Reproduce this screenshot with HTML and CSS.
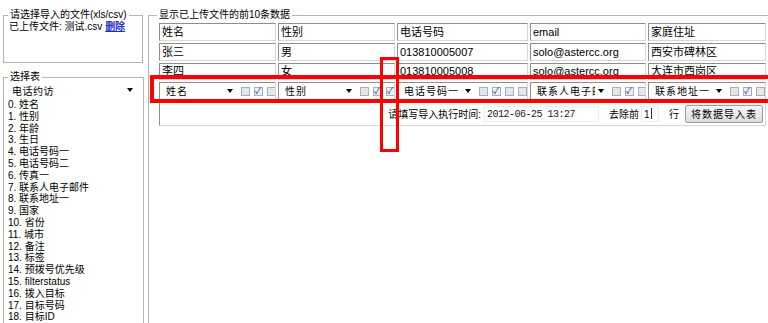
FILE: index.html
```html
<!DOCTYPE html>
<html lang="zh-CN">
<head>
  <meta charset="UTF-8" />
  <title>导入数据</title>
  <link rel="stylesheet" href="styles.css">
</head>
<body>
  <div class="page">

    <!-- Left: file + table choice -->
    <aside class="side">
      <fieldset class="box file-box">
        <legend>请选择导入的文件(xls/csv)</legend>
        <div class="uploaded">已上传文件: 测试.csv <a href="#">删除</a></div>
      </fieldset>

      <fieldset class="box table-box">
        <legend>选择表</legend>
        <div class="select wide"><span class="label">电话约访</span><span class="arrow"></span></div>
        <ol class="fields">
          <li>0. 姓名</li>
          <li>1. 性别</li>
          <li>2. 年龄</li>
          <li>3. 生日</li>
          <li>4. 电话号码一</li>
          <li>5. 电话号码二</li>
          <li>6. 传真一</li>
          <li>7. 联系人电子邮件</li>
          <li>8. 联系地址一</li>
          <li>9. 国家</li>
          <li>10. 省份</li>
          <li>11. 城市</li>
          <li>12. 备注</li>
          <li>13. 标签</li>
          <li>14. 预拨号优先级</li>
          <li>15. filterstatus</li>
          <li>16. 拨入目标</li>
          <li>17. 目标号码</li>
          <li>18. 目标ID</li>
        </ol>
      </fieldset>
    </aside>

    <!-- Right: preview of uploaded rows -->
    <section class="main">
      <fieldset class="box preview">
        <legend>显示已上传文件的前10条数据</legend>
        <table class="grid">
          <tr>
            <td class="c1">姓名</td>
            <td class="c2">性别</td>
            <td class="c3">电话号码</td>
            <td class="c4">email</td>
            <td class="c5">家庭住址</td>
          </tr>
          <tr>
            <td>张三</td>
            <td>男</td>
            <td>013810005007</td>
            <td>solo@astercc.org</td>
            <td>西安市碑林区</td>
          </tr>
          <tr class="short">
            <td>李四</td>
            <td>女</td>
            <td>013810005008</td>
            <td>solo@astercc.org</td>
            <td>大连市西岗区</td>
          </tr>
          <tr class="picks">
            <td>
              <div class="pick">
                <div class="select"><span class="label">姓名</span><span class="arrow"></span></div>
                <span class="cb"></span><span class="cb on"></span><span class="cb"></span>
              </div>
            </td>
            <td>
              <div class="pick">
                <div class="select"><span class="label">性别</span><span class="arrow"></span></div>
                <span class="cb"></span><span class="cb on"></span><span class="cb on"></span>
              </div>
            </td>
            <td>
              <div class="pick">
                <div class="select"><span class="label">电话号码一</span><span class="arrow"></span></div>
                <span class="cb"></span><span class="cb on"></span><span class="cb"></span><span class="cb"></span>
              </div>
            </td>
            <td>
              <div class="pick">
                <div class="select"><span class="label">联系人电子邮件</span><span class="arrow"></span></div>
                <span class="cb"></span><span class="cb on"></span><span class="cb"></span>
              </div>
            </td>
            <td>
              <div class="pick">
                <div class="select"><span class="label">联系地址一</span><span class="arrow"></span></div>
                <span class="cb"></span><span class="cb on"></span><span class="cb"></span>
              </div>
            </td>
          </tr>
          <tr class="actions">
            <td colspan="5">
              <div class="run">
                <span>请填写导入执行时间:</span>
                <span class="input date">2012-06-25 13:27</span>
                <span class="skip">去除前</span>
                <span class="input num">1</span>
                <span class="unit">行</span>
                <button class="button">将数据导入表</button>
              </div>
            </td>
          </tr>
        </table>
      </fieldset>
    </section>

    <!-- Red annotation boxes -->
    <div class="mark mark-row"></div>
    <div class="mark mark-col"></div>
  </div>
</body>
</html>
```

FILE: styles.css
```css
* {
  box-sizing: border-box;
}

html, body {
  margin: 0;
  height: 100%;
  overflow: hidden;
  background: #fff;
}

body {
  font-family: "Liberation Sans", "Noto Sans CJK SC", sans-serif;
  font-size: 10px;
  color: #000;
}

.page {
  display: flex;
  height: 323px;
  position: relative;
}

/* Fieldsets */
.box {
  border: 1px solid #b4b4b4;
  margin: 0 0 0 3px;
  padding: 0 4px;
  min-width: 0;
}

.box legend {
  padding: 0 2px;
  line-height: 12px;
}

/* Left column */
.side {
  width: 145px;
  flex: none;
  padding-top: 9px;
}

.file-box {
  width: 140px;
  height: 54px;
}

.uploaded {
  line-height: 12px;
  padding-left: 1px;
}

.uploaded a {
  color: #1a2fc8;
  font-weight: bold;
}

.table-box {
  width: 141px;
  height: 262px;
  margin-top: 8px;
}

.fields {
  list-style: none;
  margin: 2px 0 0;
  padding: 0;
  line-height: 11.8px;
}

/* Fake selects */
.select {
  display: flex;
  align-items: center;
  width: 76px;
  height: 16px;
  background: #fff;
  padding: 0 4px 0 5px;
  letter-spacing: 1px;
  flex: none;
}

.select .label {
  flex: 1;
  overflow: hidden;
  white-space: nowrap;
}

.select .arrow {
  width: 0;
  height: 0;
  margin-left: 3px;
  border-left: 3px solid transparent;
  border-right: 3px solid transparent;
  border-top: 4px solid #000;
  flex: none;
}

.select.wide {
  width: 130px;
  height: 14px;
  padding: 0 5px 0 4px;
  letter-spacing: 0.5px;
}

/* Right column */
.main {
  flex: 1;
  min-width: 0;
  padding: 9px 0 0 0;
}

.preview {
  margin-right: -30px;
  padding: 0 0 0 8px;
  height: 330px;
}

.grid {
  border-collapse: separate;
  border-spacing: 2px;
  table-layout: fixed;
  width: 611px;
  font-size: 11px;
}

.grid td {
  border: 1px solid #a9a9a9;
  border-color: #8e8e8e #d6d6d6 #d6d6d6 #8e8e8e;
  height: 18px;
  padding: 0 2px;
  line-height: 15px;
  white-space: nowrap;
  overflow: hidden;
}

.grid .c1 { width: 117px; }
.grid .c2 { width: 117px; }
.grid .c3 { width: 131px; }
.grid .c4 { width: 116px; }

.grid .short td {
  height: 17px;
}

.picks td {
  padding: 0 1px;
  font-size: 10px;
}

.pick {
  display: flex;
  align-items: center;
  gap: 4px;
}

.cb {
  width: 9px;
  height: 9px;
  border: 1px solid #a6b0bb;
  background: #e4e6e8;
  flex: none;
  position: relative;
}

.cb.on {
  background: #eef0f2;
}

.cb.on::after {
  content: "\2713";
  position: absolute;
  left: 0;
  top: -3px;
  font-size: 9px;
  line-height: 12px;
  color: #2848a8;
}

.actions td {
  height: 24px;
  padding: 0 2px 0 0;
  font-size: 10px;
}

.run {
  display: flex;
  justify-content: flex-end;
  align-items: center;
}

.input {
  background: #fff;
  height: 16px;
  line-height: 16px;
  border: 1px solid #ececec;
}

.date {
  width: 115px;
  margin-left: 3px;
  padding-left: 2px;
  font-family: "Liberation Mono", monospace;
  font-size: 10px;
  letter-spacing: -0.5px;
  color: #222;
}

.skip {
  margin-left: 10px;
}

.num {
  width: 18px;
  margin-left: 2px;
  padding-left: 2px;
}

.num::after {
  content: "";
  display: inline-block;
  width: 1px;
  height: 11px;
  margin-left: 1px;
  vertical-align: -1px;
  background: #333;
}

.unit {
  margin-left: 10px;
}

.button {
  margin-left: 6px;
  width: 78px;
  height: 18px;
  padding: 0;
  font: inherit;
  letter-spacing: 1px;
  background: linear-gradient(#f8f8f8, #dcdcdc);
  border: 1px solid #9c9c9c;
  border-radius: 2px;
  color: #000;
}

/* Annotation overlays */
.mark {
  position: absolute;
  border: 4px solid #f00;
  pointer-events: none;
}

.mark-row {
  left: 150px;
  top: 75px;
  width: 625px;
  height: 28px;
}

.mark-col {
  left: 380px;
  top: 57px;
  width: 19px;
  height: 95px;
  border-width: 3px;
}
```
